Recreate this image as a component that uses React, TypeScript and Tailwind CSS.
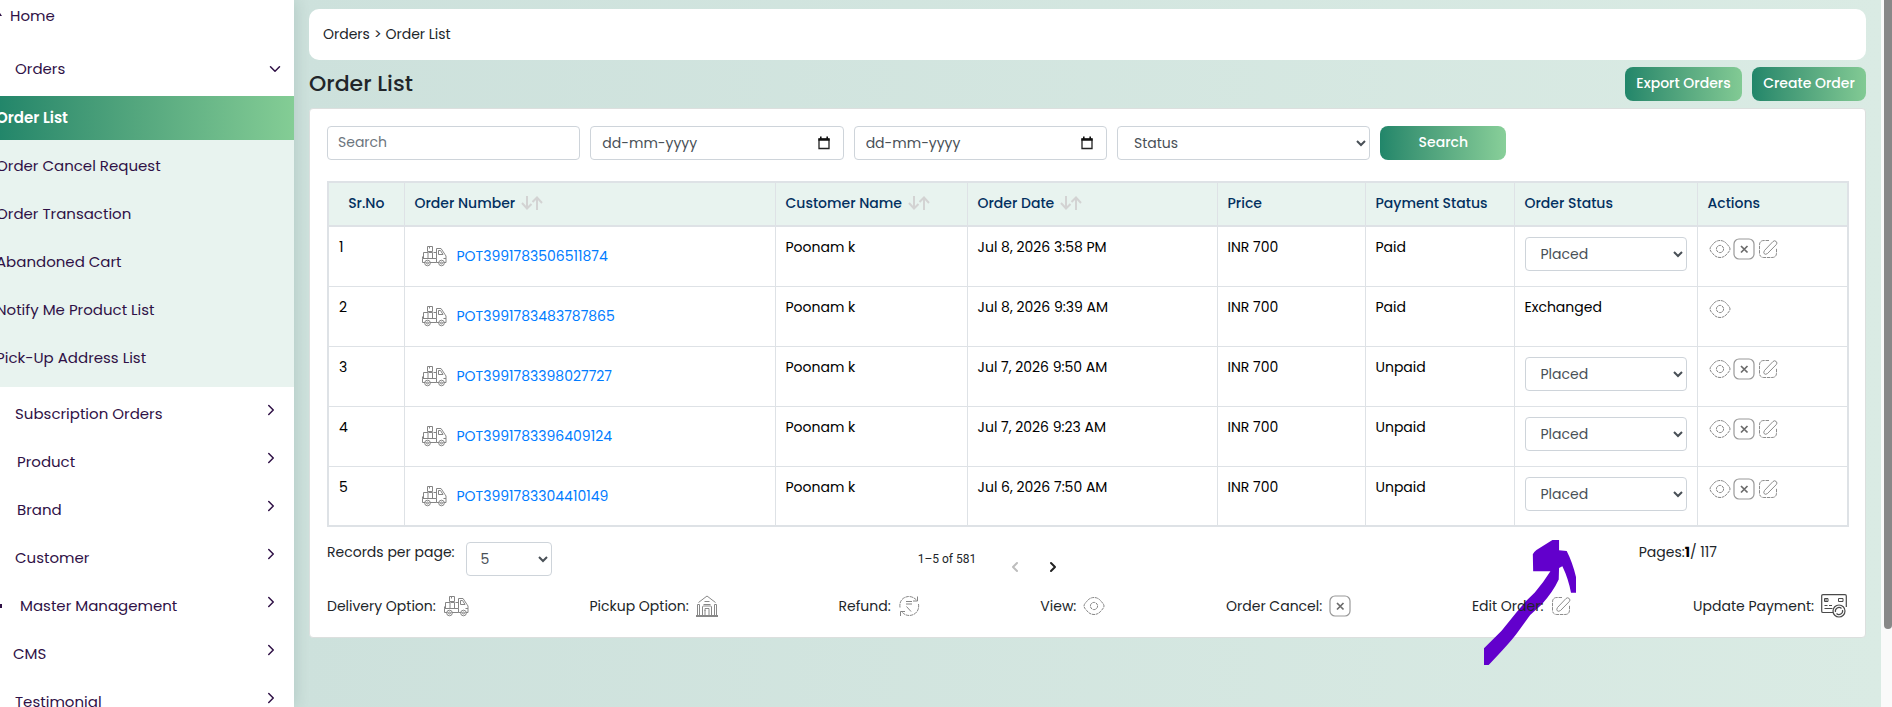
import { useState } from 'react';
import { ChevronDown, ChevronLeft, ChevronRight } from 'lucide-react';

type Order = {
  id: string;
  customer: string;
  date: string;
  price: string;
  payment: string;
  status: string;
};

const orders: Order[] = [
  { id: 'POT3991783506511874', customer: 'Poonam k', date: 'Jul 8, 2026 3:58 PM', price: 'INR 700', payment: 'Paid', status: 'Placed' },
  { id: 'POT3991783483787865', customer: 'Poonam k', date: 'Jul 8, 2026 9:39 AM', price: 'INR 700', payment: 'Paid', status: 'Exchanged' },
  { id: 'POT3991783398027727', customer: 'Poonam k', date: 'Jul 7, 2026 9:50 AM', price: 'INR 700', payment: 'Unpaid', status: 'Placed' },
  { id: 'POT3991783396409124', customer: 'Poonam k', date: 'Jul 7, 2026 9:23 AM', price: 'INR 700', payment: 'Unpaid', status: 'Placed' },
  { id: 'POT3991783304410149', customer: 'Poonam k', date: 'Jul 6, 2026 7:50 AM', price: 'INR 700', payment: 'Unpaid', status: 'Placed' },
];

const orderLinks = [
  'Order Cancel Request',
  'Order Transaction',
  'Abandoned Cart',
  'Notify Me Product List',
  'Pick-Up Address List',
];

const menu = [
  { name: 'Subscription Orders', pad: 'pl-[15px]' },
  { name: 'Product', pad: 'pl-[17px]' },
  { name: 'Brand', pad: 'pl-[17px]' },
  { name: 'Customer', pad: 'pl-[15px]' },
  { name: 'Master Management', pad: 'pl-5' },
  { name: 'CMS', pad: 'pl-[13px]' },
  { name: 'Testimonial', pad: 'pl-[15px]' },
];

const columns = [
  { name: 'Sr.No', width: 'w-[76px]', sortable: false },
  { name: 'Order Number', width: 'w-[371px]', sortable: true },
  { name: 'Customer Name', width: 'w-[192px]', sortable: true },
  { name: 'Order Date', width: 'w-[250px]', sortable: true },
  { name: 'Price', width: 'w-[148px]', sortable: false },
  { name: 'Payment Status', width: 'w-[149px]', sortable: false },
  { name: 'Order Status', width: 'w-[183px]', sortable: false },
  { name: 'Actions', width: 'w-[151px]', sortable: false },
];

const TruckIcon = () => (
  <svg viewBox="0 0 26 22" className="h-[22px] w-[26px] shrink-0" fill="none" stroke="#858585" strokeWidth="1">
    <path d="M4.5 17.5h-3v-4h14v4h-7M1.5 13.5v-2M15.5 13.5v-10h4.5l4 6 1 1.5v6.5h-2.500M18.5 17.500h-3M17.500 5.500v4h4.500l-2.500-4zM22.500 13.500h2.500" />
    <path d="M2.500 7.500h4.500v6M2.500 7.500v6M7.500 7.500h4v6M12.500 7.500h3M6.500 1.500h5v5h-5zM8.500 1.500v2" />
    <circle cx="6.500" cy="18" r="2.800" />
    <circle cx="6.500" cy="18" r="1" />
    <circle cx="20.500" cy="18" r="2.800" />
    <circle cx="20.500" cy="18" r="1" />
  </svg>
);

const EyeIcon = () => (
  <svg viewBox="0 0 22 22" className="size-[22px] shrink-0" fill="none" stroke="#777" strokeWidth="0.9">
    <path strokeDasharray="3 0.7" d="M1 11c0-1.500 1.300-3 2.500-4.300C5.500 4 8 2.500 11 2.500s5.500 1.500 7.500 4.200C19.700 8 21 9.500 21 11s-1.300 3-2.500 4.300c-2 2.700-4.500 4.200-7.500 4.200s-5.500-1.500-7.500-4.200C2.300 14 1 12.500 1 11z" />
    <circle cx="11" cy="11" r="3.600" strokeDasharray="3 0.700" />
  </svg>
);

const CancelIcon = () => (
  <svg viewBox="0 0 22 22" className="size-[22px] shrink-0" fill="none">
    <rect x="1" y="1" width="20" height="20" rx="5" stroke="#999" strokeWidth="1.200" />
    <path d="M8 8l6.500 6.500M14.500 8L8 14.500" stroke="#6b6b6b" strokeWidth="1.700" />
  </svg>
);

const EditIcon = () => (
  <svg viewBox="0 0 22 22" className="size-[22px] shrink-0" fill="none" stroke="#808080" strokeWidth="0.9">
    <path strokeDasharray="3.500 0.800" d="M12 2.500H7Q2.500 2.500 2.500 7v8q0 4.500 4.500 4.500h8q4.500 0 4.500-4.500v-5" />
    <path d="M7.500 12.500L16 3.500q1.600-1.500 3.200 0t0 3.200L10.500 15.500Q8.500 17 7.300 15.800T7.500 12.500z" />
  </svg>
);

const HouseIcon = () => (
  <svg viewBox="0 0 22 22" className="size-[22px] shrink-0" fill="none" stroke="#888" strokeWidth="1">
    <path d="M2.500 7.500L11 1l8.500 6.500M1.500 21V9.500h2V21M18.500 21V9.500h2V21M0 20.500h22M0 21.500h22M8.500 6.500h5M7.500 9.500h7" />
    <path d="M6.500 20v-8q0-1 1-1h7q1 0 1 1v8M9 20v-6.500h4V20M8.500 15.500h1" />
  </svg>
);

const RefundIcon = () => (
  <svg viewBox="0 0 22 22" className="size-[22px] shrink-0" fill="none" stroke="#777" strokeWidth="0.900">
    <path strokeDasharray="3.500 0.700" d="M2 12.500C1 6 5 2 10.500 1.500c3.500 0 6 1.500 8 3.500M20.500 9c1 6-2.500 11-9 11.500-3.500 0-6-1.500-8-4" />
    <path d="M19.500 1.500V6h-4.500M2.500 21v-4.500H7M8 6.500h6M8 9h6M8.500 11.500l4.500 5" />
  </svg>
);

const PaymentIcon = () => (
  <svg viewBox="0 0 26 24" className="h-6 w-[26px] shrink-0" fill="none" stroke="#4a4a4a" strokeWidth="1.200">
    <path d="M12 18.500H2q-1.300 0-1.300-1.300V2Q.7.7 2 .7h22q1.300 0 1.300 1.300v11" />
    <path strokeWidth="1" d="M3.500 4.500H7v3H3.500zM5 4.500v3M17.500 4.500H22v3h-4.500zM3.500 11.500h3M8 11.500h3M3.500 14.500h8" />
    <circle cx="18" cy="17" r="6" fill="#fff" />
    <path d="M14.500 18a3.600 3.600 0 0 1 6-3.500M21.500 16a3.600 3.600 0 0 1-6 3.500" />
  </svg>
);

const CalendarIcon = () => (
  <svg viewBox="0 0 12 14" className="h-[14px] w-3" fill="none">
    <path d="M1 3h10v9.500H1z" stroke="#222" strokeWidth="1.300" />
    <path d="M.4 2.500h11.200v2.200H.4zM2 .5h1.600v2H2zM8.400.5H10v2H8.400z" fill="#111" />
  </svg>
);

const SortIcon = () => (
  <svg viewBox="0 0 22 14" className="h-[14px] w-[22px]" fill="none" stroke="#d3d3d3" strokeWidth="2">
    <path d="M6 0v12M1 7l5 5.500L10.500 8M16 14V2M11.500 6L16 1.500 21 7" />
  </svg>
);

const legend = [
  { label: 'Delivery Option:', icon: <TruckIcon /> },
  { label: 'Pickup Option:', icon: <HouseIcon /> },
  { label: 'Refund:', icon: <RefundIcon /> },
  { label: 'View:', icon: <EyeIcon /> },
  { label: 'Order Cancel:', icon: <CancelIcon /> },
  { label: 'Edit Order:', icon: <EditIcon /> },
  { label: 'Update Payment:', icon: <PaymentIcon /> },
];

function Sidebar() {
  return (
    <nav className="z-10 w-[294px] shrink-0 overflow-hidden bg-white text-[15px] text-[#2f1146] shadow-[2px_0_14px_rgba(0,60,50,0.12)]">
      <a href="#home" className="flex h-8 items-center gap-2">
        <svg viewBox="0 0 2 8" className="h-2 w-[2px]">
          <path d="M0 1l2 3H0z" fill="#2f1146" />
        </svg>
        Home
      </a>
      <button type="button" className="mt-[10px] flex h-[54px] w-full items-center justify-between pr-[10px] pl-[15px]">
        Orders
        <ChevronDown className="size-[18px]" />
      </button>
      <a
        href="#orders"
        className="flex h-11 items-center bg-linear-to-r from-[#22866a] to-[#84cd95] font-semibold text-white"
      >
        <span className="-ml-1">Order List</span>
      </a>
      <div className="bg-[#e8f3ef] pt-[2px] pb-[5px]">
        {orderLinks.map((name) => (
          <a key={name} href="#orders" className="flex h-12 items-center">
            <span className="-ml-1">{name}</span>
          </a>
        ))}
      </div>
      <div className="pt-[3px]">
        {menu.map((item) => (
          <button key={item.name} type="button" className="relative flex h-12 w-full items-center justify-between pr-[14px]">
            {item.name === 'Master Management' && <span className="absolute left-0 h-1 w-[2px] bg-[#2f1146]" />}
            <span className={item.pad}>{item.name}</span>
            <ChevronRight className="mb-2 size-[18px]" />
          </button>
        ))}
      </div>
    </nav>
  );
}

function DateInput({ label }: { label: string }) {
  return (
    <div className="relative w-1/6">
      <input
        type="text"
        aria-label={label}
        placeholder="dd-mm-yyyy"
        className="h-[34px] w-full rounded border border-[#ced4da] bg-white px-[11px] placeholder:text-[#495057]"
      />
      <button type="button" aria-label={`Pick ${label}`} className="absolute top-[10px] right-[14px]">
        <CalendarIcon />
      </button>
    </div>
  );
}

export default function App() {
  const [statuses, setStatuses] = useState<Record<string, string>>({});

  return (
    <div className="flex h-screen overflow-hidden bg-white font-[Poppins,Inter,sans-serif] text-sm text-[#212529]">
      <Sidebar />

      <main className="min-w-0 flex-1 bg-linear-to-r from-[#cde1dc] to-[#daebe4] pt-[9px] pr-[15px] pl-[15px]">
        <div className="flex h-[51px] items-center rounded-[10px] bg-white px-[14px] pb-[2px]">
          <a href="#orders">Orders</a>
          <span className="mx-1">&gt;</span>
          <span>Order List</span>
        </div>

        <div className="flex h-12 items-center justify-between">
          <h1 className="text-[22px] font-medium">Order List</h1>
          <div className="flex gap-[10px] font-medium text-white">
            <button type="button" className="h-[34px] w-[117px] rounded-lg bg-linear-to-r from-[#21866a] to-[#82ca94] pb-[2px]">
              Export Orders
            </button>
            <button type="button" className="h-[34px] w-[114px] rounded-lg bg-linear-to-r from-[#21866a] to-[#82ca94] pb-[2px]">
              Create Order
            </button>
          </div>
        </div>

        <div className="relative rounded border border-[#dcdfde] bg-white pt-[17px] pr-[18px] pb-[19px] pl-[17px]">
          {/* Filters */}
          <form className="flex gap-[10px]" onSubmit={(e) => e.preventDefault()}>
            <input
              type="search"
              aria-label="Search"
              placeholder="Search"
              className="h-[34px] w-1/6 rounded border border-[#ced4da] bg-white px-[10px] pb-[2px] placeholder:text-[#6c757d]"
            />
            <DateInput label="From date" />
            <DateInput label="To date" />
            <select aria-label="Status" className="h-[34px] w-1/6 rounded border border-[#ced4da] bg-white px-3 text-[#495057]">
              <option>Status</option>
              <option>Placed</option>
              <option>Exchanged</option>
            </select>
            <button
              type="submit"
              className="h-[34px] w-[126px] rounded-lg bg-linear-to-r from-[#21866a] to-[#88cf99] pb-[2px] font-medium text-white"
            >
              Search
            </button>
          </form>

          {/* Orders table */}
          <table className="mt-[21px] w-full table-fixed border-collapse border-2 border-[#dee2e6] text-black">
            <thead>
              <tr className="h-11 border-b-2 border-[#dee2e6] bg-[#e8f3ef] text-[#033060]">
                {columns.map((col) => (
                  <th
                    key={col.name}
                    className={`${col.width} border-r border-[#dee2e6] px-[10px] pb-[2px] font-medium whitespace-nowrap ${
                      col.name === 'Sr.No' ? 'text-center' : 'text-left'
                    }`}
                  >
                    <span className="inline-flex items-center gap-[6px]">
                      {col.name}
                      {col.sortable && <SortIcon />}
                    </span>
                  </th>
                ))}
              </tr>
            </thead>
            <tbody>
              {orders.map((order, i) => (
                <tr key={order.id} className="h-[60px] border-b border-[#dee2e6] align-top">
                  <td className="border-r border-[#dee2e6] px-[10px] pt-[10px]">{i + 1}</td>
                  <td className="border-r border-[#dee2e6] px-4 pt-[18px]">
                    <div className="flex items-center gap-[10px]">
                      <TruckIcon />
                      <a href="#order" className="text-[#007bff]">{order.id}</a>
                    </div>
                  </td>
                  <td className="border-r border-[#dee2e6] px-[10px] pt-[10px]">{order.customer}</td>
                  <td className="border-r border-[#dee2e6] px-[10px] pt-[10px]">{order.date}</td>
                  <td className="border-r border-[#dee2e6] px-[10px] pt-[10px]">{order.price}</td>
                  <td className="border-r border-[#dee2e6] px-[10px] pt-[10px]">{order.payment}</td>
                  <td className="border-r border-[#dee2e6] px-[10px] pt-[10px]">
                    {order.status === 'Exchanged' ? (
                      order.status
                    ) : (
                      <select
                        aria-label={`Status of ${order.id}`}
                        value={statuses[order.id] ?? order.status}
                        onChange={(e) => setStatuses({ ...statuses, [order.id]: e.target.value })}
                        className="h-[34px] w-full rounded border border-[#ced4da] bg-white px-[11px] text-[#495057]"
                      >
                        <option>Placed</option>
                        <option>Shipped</option>
                        <option>Delivered</option>
                      </select>
                    )}
                  </td>
                  <td className="px-[11px] pt-[11px]">
                    <div className="flex gap-[2px]">
                      <button type="button" aria-label="View"><EyeIcon /></button>
                      {order.status !== 'Exchanged' && (
                        <>
                          <button type="button" aria-label="Cancel order"><CancelIcon /></button>
                          <button type="button" aria-label="Edit order"><EditIcon /></button>
                        </>
                      )}
                    </div>
                  </td>
                </tr>
              ))}
            </tbody>
          </table>

          {/* Pagination */}
          <div className="mt-[15px] grid grid-cols-3">
            <div className="flex gap-[11px]">
              <label htmlFor="per-page" className="whitespace-nowrap">Records per page:</label>
              <select id="per-page" className="h-[34px] w-[86px] rounded border border-[#ced4da] bg-white px-[10px] text-[#495057]">
                <option>5</option>
                <option>10</option>
                <option>25</option>
              </select>
            </div>
            <div className="flex items-center pl-[84px] font-[Roboto,sans-serif] text-xs">
              <span className="w-[89px]">1–5 of 581</span>
              <button type="button" aria-label="Previous page" className="mt-4 text-[#bdbdbd]">
                <ChevronLeft className="size-4" strokeWidth={3} />
              </button>
              <button type="button" aria-label="Next page" className="mt-4 ml-[22px] text-[#212121]">
                <ChevronRight className="size-4" strokeWidth={3} />
              </button>
            </div>
            <div className="pr-[130px] text-right">
              Pages:<b className="text-black">1</b>/ 117
            </div>
          </div>

          {/* Hand drawn arrow */}
          <svg
            viewBox="192 119 277 376"
            className="pointer-events-none absolute right-[289px] -bottom-7 h-[125px] w-[92px]"
            fill="#6200cc"
          >
            <path d="M192 445L245 392 290 336 318 303 345 277Q370 248 392 213L340 213 339 162Q342 155 350 149L398 119 418 119 418 150 441 152Q458 185 469 230L469 278 454 278Q446 235 428 198L418 203 417 238Q400 275 365 314L331 345 290 401Q270 428 206 495L192 495z" />
          </svg>

          {/* Icon legend */}
          <div className="relative mt-[18px] flex items-center justify-between">
            {legend.map((item) => (
              <div key={item.label} className="flex items-center gap-[7px]">
                {item.label}
                {item.icon}
              </div>
            ))}
          </div>
        </div>
      </main>

      {/* Scrollbar */}
      <div className="w-[11px] shrink-0 bg-[#fafafa] pl-[3px]">
        <div className="h-[89%] rounded-b-full bg-[#888]" />
      </div>
    </div>
  );
}
